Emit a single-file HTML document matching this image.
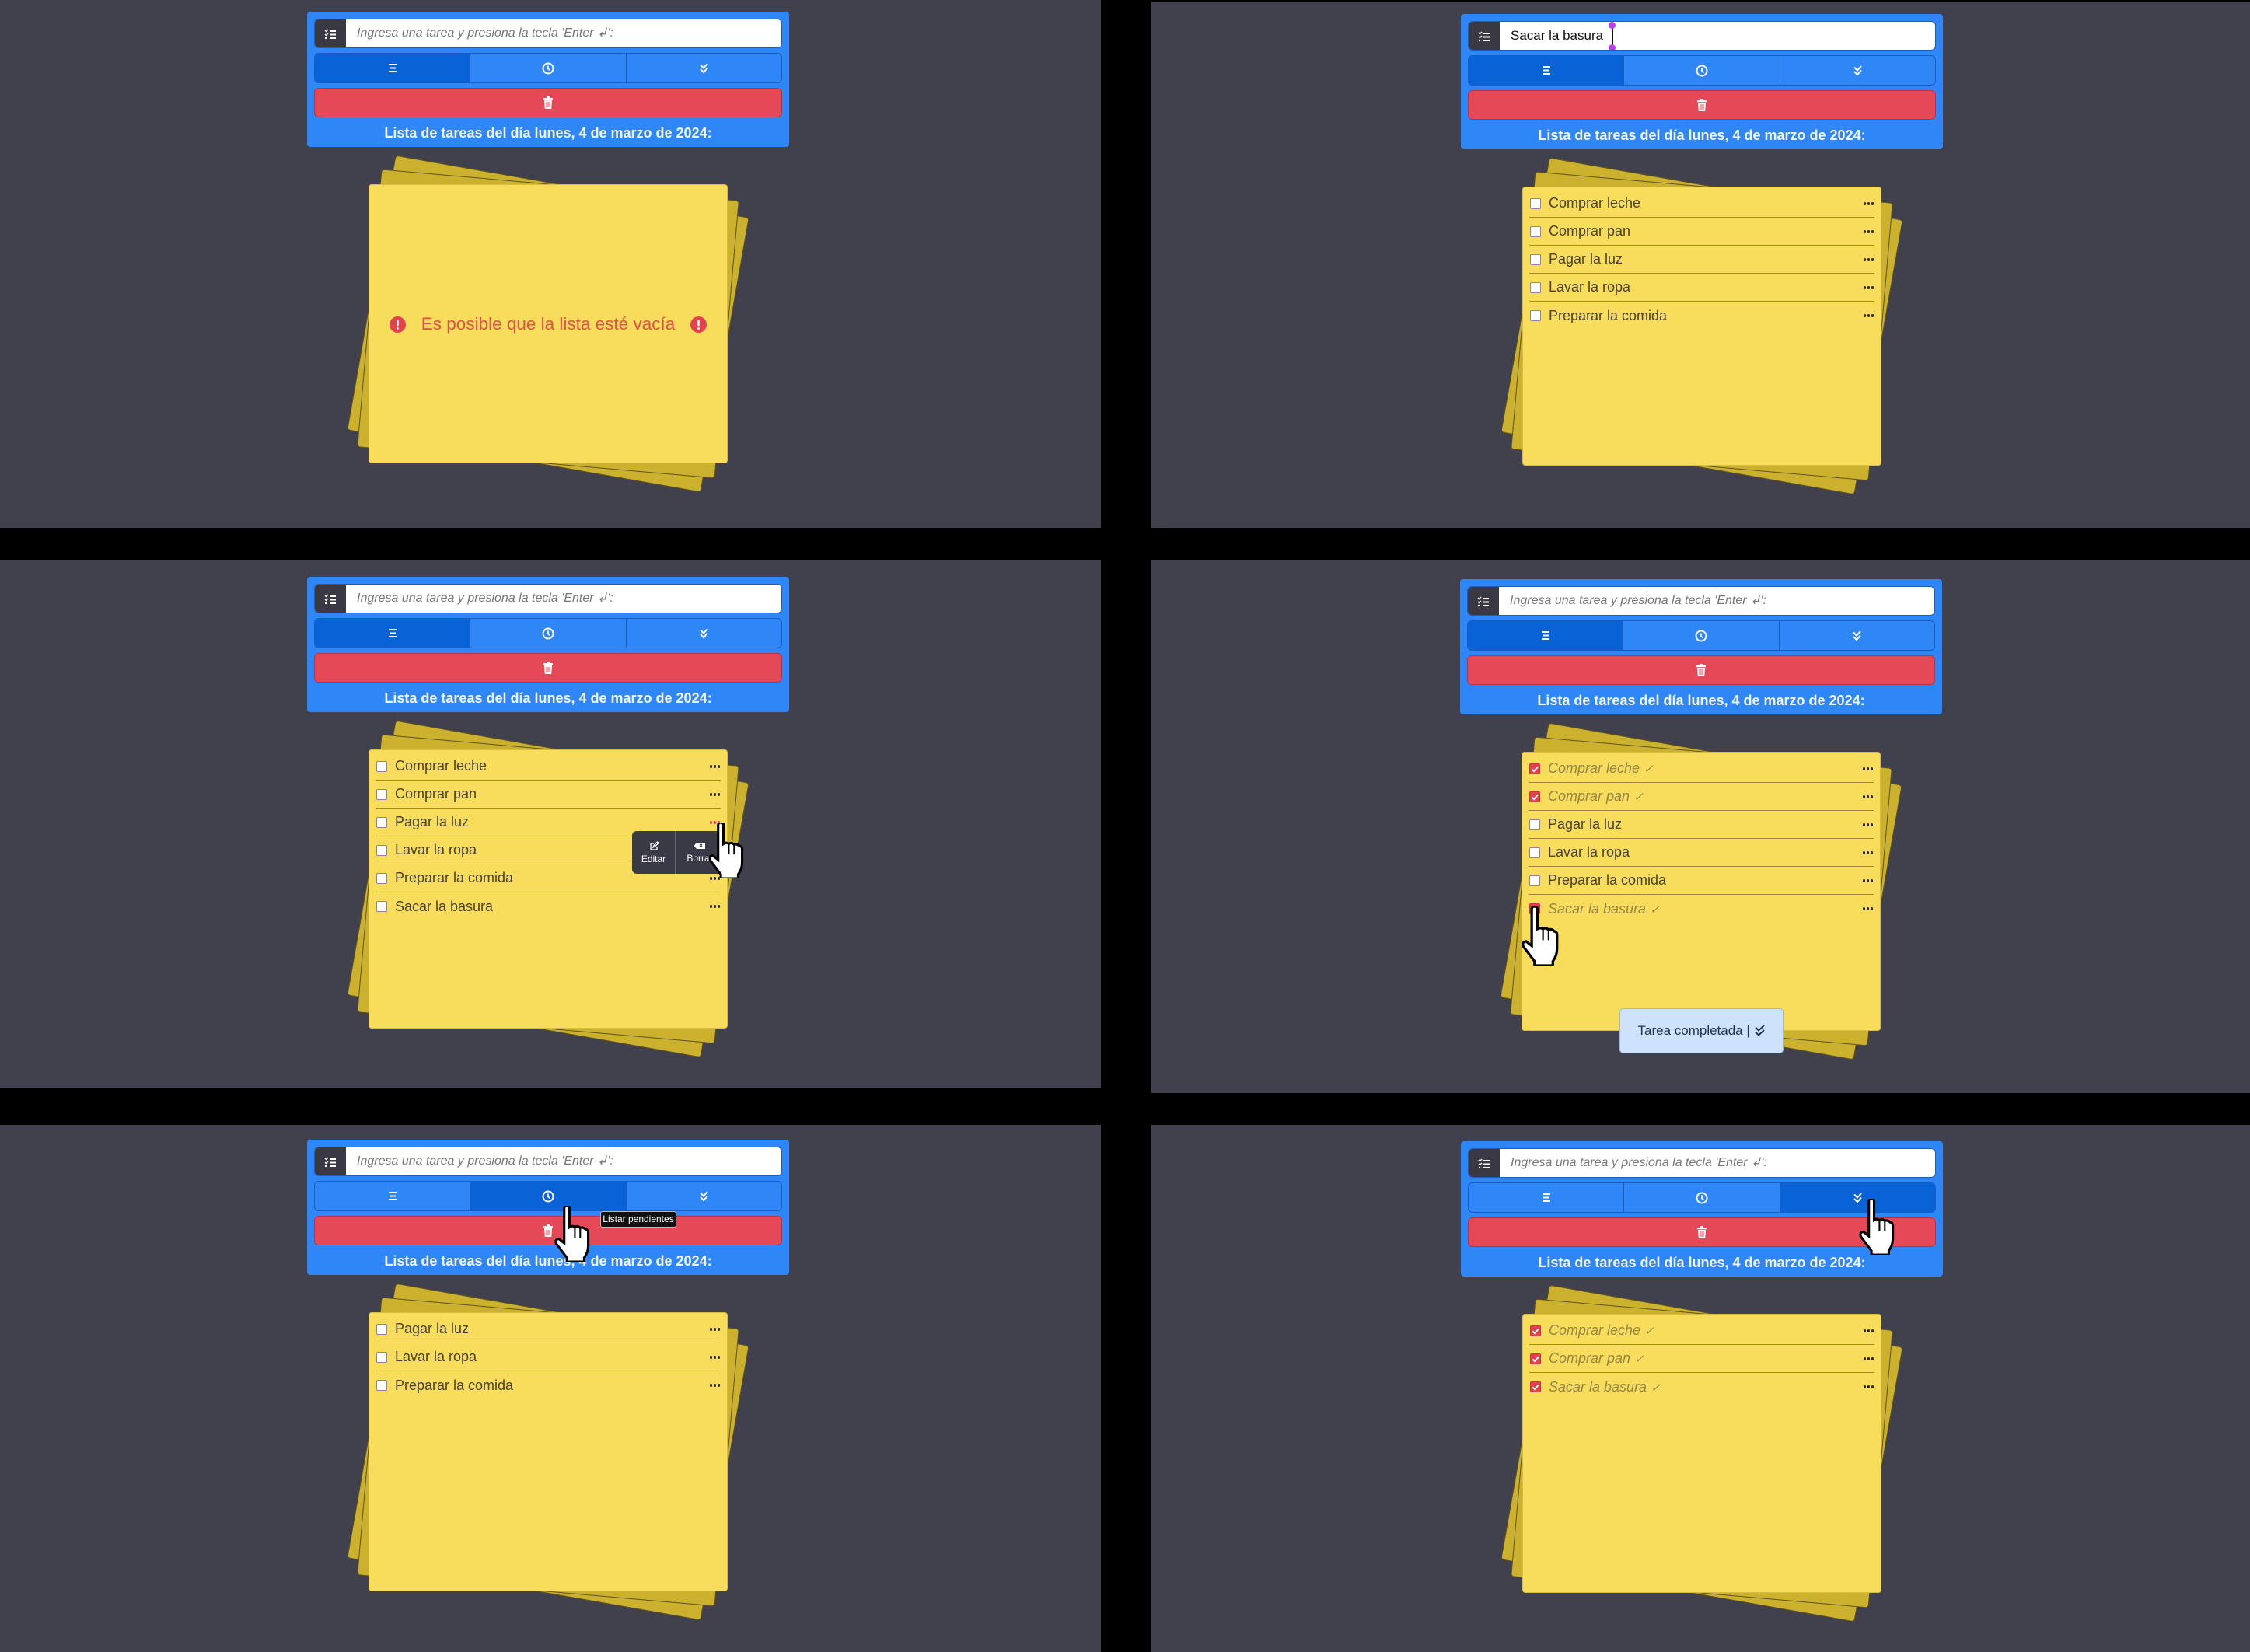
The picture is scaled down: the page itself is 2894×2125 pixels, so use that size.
<!DOCTYPE html>
<html><head><meta charset="utf-8">
<style>
*{box-sizing:border-box;margin:0;padding:0}
html,body{width:2894px;height:2125px;background:#000;overflow:hidden;font-family:"Liberation Sans",sans-serif}
.pan{position:absolute;background:#41404d}
.grp{position:absolute;width:620px;height:600px}
.hdr{position:absolute;left:0;top:0;width:620px;height:174px;background:#2f86f7;border-radius:4px}
.inp{position:absolute;left:9px;top:9px;width:602px;height:38px;background:#fff;border-radius:6px;overflow:hidden;border:1px solid #1e5cb8}
.ib{position:absolute;left:0;top:0;width:40px;height:38px;background:#393843;display:flex;align-items:center;justify-content:center}
.ph{position:absolute;left:54px;top:0;line-height:36px;font-size:16px;font-style:italic;color:#777}
.val{position:absolute;left:54px;top:0;line-height:36px;font-size:17px;color:#111}
.btns{position:absolute;left:9px;top:53px;width:602px;height:39px;border:1px solid #1f5cba;border-radius:6px;overflow:hidden;display:flex;background:#2f86f7}
.b{flex:1;display:flex;align-items:center;justify-content:center;border-right:1px solid #1f5cba}
.b:last-child{border-right:none}
.b.on{background:#0a63d6}
.del{position:absolute;left:9px;top:98px;width:602px;height:38px;background:#e54856;border:1px solid #b83444;border-radius:6px;display:flex;align-items:center;justify-content:center}
.ttl{position:absolute;left:0;top:145px;width:620px;text-align:center;font-weight:bold;font-size:18px;color:#f2f6ff;line-height:22px}
.sh{position:absolute;left:79px;top:222px;width:462px;height:359px;background:#cbb12e;border:1px solid #5e5320;border-radius:4px}
.s1{transform:rotate(5deg)}.s2{transform:rotate(10deg)}
.note{position:absolute;left:79px;top:222px;width:462px;height:359px;background:#f8dc5c;border-radius:4px;border:1px solid #d9bd40;padding-top:3px}
.row{height:36px;margin:0 8px;border-bottom:1.5px solid #9e8834;display:flex;align-items:center;position:relative}
.row:last-child{border-bottom:none}
.cb{width:14px;height:14px;margin-left:1px;background:#fff;border:1.5px solid #8d82a6;border-radius:2px;flex:none}
.cb.k{background:#e4404f;border-color:#c93040;display:flex;align-items:center;justify-content:center}
.tx{margin-left:10px;font-size:18px;color:#4a4232}
.tx.d{font-style:italic;color:#978648}
.dots{position:absolute;right:1px;top:16px;display:flex;gap:1.5px}
.dots i{width:3.5px;height:3.5px;border-radius:2px;background:#2a2a2a;display:block}
.dots.r i{background:#e4404f}
.cur{position:absolute;z-index:20}
</style></head><body>

<div class="pan" style="left:0;top:0;width:1416px;height:679px"></div>
<div class="pan" style="left:1480px;top:2px;width:1414px;height:677px"></div>
<div class="pan" style="left:0;top:720px;width:1416px;height:679px"></div>
<div class="pan" style="left:1480px;top:720px;width:1414px;height:686px"></div>
<div class="pan" style="left:0;top:1447px;width:1416px;height:678px"></div>
<div class="pan" style="left:1480px;top:1447px;width:1414px;height:678px"></div>

<svg width="0" height="0" style="position:absolute">
<defs>
<g id="ilc"><path d="M1 2l1.5 1.5L5 1M1 7l1.5 1.5L5 6" stroke="#fff" stroke-width="1.4" fill="none"/><circle cx="2" cy="12" r="1.2" fill="#fff"/><path d="M7 3h8M7 7.5h8M7 12h8" stroke="#fff" stroke-width="2"/></g>
<g id="ibar"><path d="M2 2h10M3 6.5h8M2 11h10" stroke="#fff" stroke-width="2"/></g>
<g id="iclk"><circle cx="8" cy="8" r="6.5" stroke="#fff" stroke-width="2" fill="none"/><path d="M8 4.5V8.5l2.5 1.8" stroke="#fff" stroke-width="1.8" fill="none"/></g>
<g id="ichk"><path d="M3 2.5l4 4 5-5.5M3 8l4 4 5-5.5" stroke="#fff" stroke-width="2" fill="none"/></g>
<g id="itr"><rect x="1" y="2" width="12" height="2.2" fill="#fff"/><rect x="5" y="0" width="4" height="2" fill="#fff"/><path d="M2 5h10l-.8 11H2.8z" fill="#fff"/><path d="M5 7v7M7 7v7M9 7v7" stroke="#e54856" stroke-width="1"/></g>
<g id="hand"><path d="M4 1Q4 0 5 0Q6 0 6 1V8Q7 7.3 8 8Q9 7.3 10 8.3Q11 7.8 12 8.8Q13 9 13 10V15Q13 17.5 11.5 19.5V21H5V19.5L1 14.2Q0.4 12.6 2 12.4L4 14Z" fill="#fff" stroke="#000" stroke-width="0.9" stroke-linejoin="miter"/><path d="M8 8v4M10 8.5v3.5" stroke="#000" stroke-width="0.6"/></g>
<g id="ck"><path d="M2.5 6.5l2.5 2.5 5-5.5" stroke="#fff" stroke-width="2" fill="none"/></g>
</defs>
</svg>

<!-- A -->
<div class="grp" style="left:395px;top:15px">
 <div class="hdr">
  <div class="inp"><div class="ib"><svg width="16" height="14"><use href="#ilc"/></svg></div><div class="ph">Ingresa una tarea y presiona la tecla 'Enter ↲':</div></div>
  <div class="btns"><div class="b on"><svg width="14" height="13"><use href="#ibar"/></svg></div><div class="b"><svg width="16" height="16"><use href="#iclk"/></svg></div><div class="b"><svg width="15" height="14"><use href="#ichk"/></svg></div></div>
  <div class="del"><svg width="14" height="16"><use href="#itr"/></svg></div>
  <div class="ttl">Lista de tareas del día lunes, 4 de marzo de 2024:</div>
 </div>
 <div class="sh s2"></div><div class="sh s1"></div>
 <div class="note">
  <div style="position:absolute;left:0;top:166px;width:460px;display:flex;align-items:center;justify-content:center;gap:20px;color:#e0504a;font-size:22.5px">
   <svg width="21" height="21"><circle cx="10.5" cy="10.5" r="10.5" fill="#e3434f"/><rect x="9.3" y="4.5" width="2.4" height="8" rx="1" fill="#fff"/><circle cx="10.5" cy="15.5" r="1.4" fill="#fff"/></svg>
   <span>Es posible que la lista esté vacía</span>
   <svg width="21" height="21"><circle cx="10.5" cy="10.5" r="10.5" fill="#e3434f"/><rect x="9.3" y="4.5" width="2.4" height="8" rx="1" fill="#fff"/><circle cx="10.5" cy="15.5" r="1.4" fill="#fff"/></svg>
  </div>
 </div>
</div>

<!-- B -->
<div class="grp" style="left:1879px;top:18px">
 <div class="hdr">
  <div class="inp"><div class="ib"><svg width="16" height="14"><use href="#ilc"/></svg></div><div class="val">Sacar la basura</div>
   <div style="position:absolute;left:184px;top:4px;width:1.5px;height:30px;background:#111"></div>
   <div style="position:absolute;left:180px;top:0px;width:9px;height:9px;border-radius:5px;background:#c23cf2"></div>
   <div style="position:absolute;left:180px;top:29px;width:9px;height:9px;border-radius:5px;background:#c23cf2"></div>
  </div>
  <div class="btns"><div class="b on"><svg width="14" height="13"><use href="#ibar"/></svg></div><div class="b"><svg width="16" height="16"><use href="#iclk"/></svg></div><div class="b"><svg width="15" height="14"><use href="#ichk"/></svg></div></div>
  <div class="del"><svg width="14" height="16"><use href="#itr"/></svg></div>
  <div class="ttl">Lista de tareas del día lunes, 4 de marzo de 2024:</div>
 </div>
 <div class="sh s2"></div><div class="sh s1"></div>
 <div class="note">
  <div class="row"><div class="cb"></div><span class="tx">Comprar leche</span><div class="dots"><i></i><i></i><i></i></div></div>
  <div class="row"><div class="cb"></div><span class="tx">Comprar pan</span><div class="dots"><i></i><i></i><i></i></div></div>
  <div class="row"><div class="cb"></div><span class="tx">Pagar la luz</span><div class="dots"><i></i><i></i><i></i></div></div>
  <div class="row"><div class="cb"></div><span class="tx">Lavar la ropa</span><div class="dots"><i></i><i></i><i></i></div></div>
  <div class="row"><div class="cb"></div><span class="tx">Preparar la comida</span><div class="dots"><i></i><i></i><i></i></div></div>
 </div>
</div>

<!-- C -->
<div class="grp" style="left:395px;top:742px">
 <div class="hdr">
  <div class="inp"><div class="ib"><svg width="16" height="14"><use href="#ilc"/></svg></div><div class="ph">Ingresa una tarea y presiona la tecla 'Enter ↲':</div></div>
  <div class="btns"><div class="b on"><svg width="14" height="13"><use href="#ibar"/></svg></div><div class="b"><svg width="16" height="16"><use href="#iclk"/></svg></div><div class="b"><svg width="15" height="14"><use href="#ichk"/></svg></div></div>
  <div class="del"><svg width="14" height="16"><use href="#itr"/></svg></div>
  <div class="ttl">Lista de tareas del día lunes, 4 de marzo de 2024:</div>
 </div>
 <div class="sh s2"></div><div class="sh s1"></div>
 <div class="note">
  <div class="row"><div class="cb"></div><span class="tx">Comprar leche</span><div class="dots"><i></i><i></i><i></i></div></div>
  <div class="row"><div class="cb"></div><span class="tx">Comprar pan</span><div class="dots"><i></i><i></i><i></i></div></div>
  <div class="row"><div class="cb"></div><span class="tx">Pagar la luz</span><div class="dots r"><i></i><i></i><i></i></div></div>
  <div class="row"><div class="cb"></div><span class="tx">Lavar la ropa</span><div class="dots"><i></i><i></i><i></i></div></div>
  <div class="row"><div class="cb"></div><span class="tx">Preparar la comida</span><div class="dots"><i></i><i></i><i></i></div></div>
  <div class="row"><div class="cb"></div><span class="tx">Sacar la basura</span><div class="dots"><i></i><i></i><i></i></div></div>
 </div>
 <div style="position:absolute;left:418px;top:327px;width:118px;height:55px;background:#3a3946;border-radius:6px;display:flex;color:#fff;font-size:12px;overflow:hidden">
  <div style="width:56px;border-right:1px solid #6a6976;display:flex;flex-direction:column;align-items:center;justify-content:center;gap:4px">
   <svg width="12" height="12"><path d="M2 3h4M2 3v8h8V7M5 8l1-2.5 4.5-4.5 1.5 1.5L7.5 7z" stroke="#fff" stroke-width="1.3" fill="none"/></svg><span>Editar</span></div>
  <div style="flex:1;display:flex;flex-direction:column;align-items:center;justify-content:center;gap:4px">
   <svg width="16" height="10"><path d="M4 1h11v8H4L0.5 5z" fill="#fff"/><path d="M8 3l3 3M11 3l-3 3" stroke="#3a3946" stroke-width="1.2"/></svg><span>Borrar</span></div>
 </div>
</div>
<svg class="cur" style="left:909px;top:1058px" width="50" height="72" viewBox="0 0 14 21"><use href="#hand"/></svg>

<!-- D -->
<div class="grp" style="left:1878px;top:745px">
 <div class="hdr">
  <div class="inp"><div class="ib"><svg width="16" height="14"><use href="#ilc"/></svg></div><div class="ph">Ingresa una tarea y presiona la tecla 'Enter ↲':</div></div>
  <div class="btns"><div class="b on"><svg width="14" height="13"><use href="#ibar"/></svg></div><div class="b"><svg width="16" height="16"><use href="#iclk"/></svg></div><div class="b"><svg width="15" height="14"><use href="#ichk"/></svg></div></div>
  <div class="del"><svg width="14" height="16"><use href="#itr"/></svg></div>
  <div class="ttl">Lista de tareas del día lunes, 4 de marzo de 2024:</div>
 </div>
 <div class="sh s2"></div><div class="sh s1"></div>
 <div class="note">
  <div class="row"><div class="cb k"><svg width="12" height="12"><use href="#ck"/></svg></div><span class="tx d">Comprar leche <small>✓</small></span><div class="dots"><i></i><i></i><i></i></div></div>
  <div class="row"><div class="cb k"><svg width="12" height="12"><use href="#ck"/></svg></div><span class="tx d">Comprar pan <small>✓</small></span><div class="dots"><i></i><i></i><i></i></div></div>
  <div class="row"><div class="cb"></div><span class="tx">Pagar la luz</span><div class="dots"><i></i><i></i><i></i></div></div>
  <div class="row"><div class="cb"></div><span class="tx">Lavar la ropa</span><div class="dots"><i></i><i></i><i></i></div></div>
  <div class="row"><div class="cb"></div><span class="tx">Preparar la comida</span><div class="dots"><i></i><i></i><i></i></div></div>
  <div class="row"><div class="cb k"><svg width="12" height="12"><use href="#ck"/></svg></div><span class="tx d">Sacar la basura <small>✓</small></span><div class="dots"><i></i><i></i><i></i></div></div>
 </div>
 <div style="position:absolute;left:205px;top:552px;width:211px;height:58px;background:#cfe2fc;border:1.5px solid #98b8e2;border-radius:5px;color:#1f3550;font-size:17px;display:flex;align-items:center;justify-content:center;z-index:5">Tarea completada |&nbsp;<svg width="15" height="15"><path d="M2 2.5l4 4 7-6.5M2 8.5l4 4 7-6.5" stroke="#1f3550" stroke-width="2" fill="none"/></svg></div>
</div>
<svg class="cur" style="left:1955px;top:1166px" width="52" height="76" viewBox="0 0 14 21"><use href="#hand"/></svg>

<!-- E -->
<div class="grp" style="left:395px;top:1466px">
 <div class="hdr">
  <div class="inp"><div class="ib"><svg width="16" height="14"><use href="#ilc"/></svg></div><div class="ph">Ingresa una tarea y presiona la tecla 'Enter ↲':</div></div>
  <div class="btns"><div class="b"><svg width="14" height="13"><use href="#ibar"/></svg></div><div class="b on"><svg width="16" height="16"><use href="#iclk"/></svg></div><div class="b"><svg width="15" height="14"><use href="#ichk"/></svg></div></div>
  <div class="del"><svg width="14" height="16"><use href="#itr"/></svg></div>
  <div class="ttl">Lista de tareas del día lunes, 4 de marzo de 2024:</div>
 </div>
 <div style="position:absolute;left:377px;top:92px;width:98px;height:21px;background:#111;border:1px solid #bbb;border-radius:3px;color:#fff;font-size:12px;line-height:19px;text-align:center;z-index:5">Listar pendientes</div>
 <div class="sh s2"></div><div class="sh s1"></div>
 <div class="note">
  <div class="row"><div class="cb"></div><span class="tx">Pagar la luz</span><div class="dots"><i></i><i></i><i></i></div></div>
  <div class="row"><div class="cb"></div><span class="tx">Lavar la ropa</span><div class="dots"><i></i><i></i><i></i></div></div>
  <div class="row"><div class="cb"></div><span class="tx">Preparar la comida</span><div class="dots"><i></i><i></i><i></i></div></div>
 </div>
</div>
<svg class="cur" style="left:711px;top:1551px" width="50" height="72" viewBox="0 0 14 21"><use href="#hand"/></svg>

<!-- F -->
<div class="grp" style="left:1879px;top:1468px">
 <div class="hdr">
  <div class="inp"><div class="ib"><svg width="16" height="14"><use href="#ilc"/></svg></div><div class="ph">Ingresa una tarea y presiona la tecla 'Enter ↲':</div></div>
  <div class="btns"><div class="b"><svg width="14" height="13"><use href="#ibar"/></svg></div><div class="b"><svg width="16" height="16"><use href="#iclk"/></svg></div><div class="b on"><svg width="15" height="14"><use href="#ichk"/></svg></div></div>
  <div class="del"><svg width="14" height="16"><use href="#itr"/></svg></div>
  <div class="ttl">Lista de tareas del día lunes, 4 de marzo de 2024:</div>
 </div>
 <div class="sh s2"></div><div class="sh s1"></div>
 <div class="note">
  <div class="row"><div class="cb k"><svg width="12" height="12"><use href="#ck"/></svg></div><span class="tx d">Comprar leche <small>✓</small></span><div class="dots"><i></i><i></i><i></i></div></div>
  <div class="row"><div class="cb k"><svg width="12" height="12"><use href="#ck"/></svg></div><span class="tx d">Comprar pan <small>✓</small></span><div class="dots"><i></i><i></i><i></i></div></div>
  <div class="row"><div class="cb k"><svg width="12" height="12"><use href="#ck"/></svg></div><span class="tx d">Sacar la basura <small>✓</small></span><div class="dots"><i></i><i></i><i></i></div></div>
 </div>
</div>
<svg class="cur" style="left:2389px;top:1542px" width="50" height="72" viewBox="0 0 14 21"><use href="#hand"/></svg>

</body></html>
